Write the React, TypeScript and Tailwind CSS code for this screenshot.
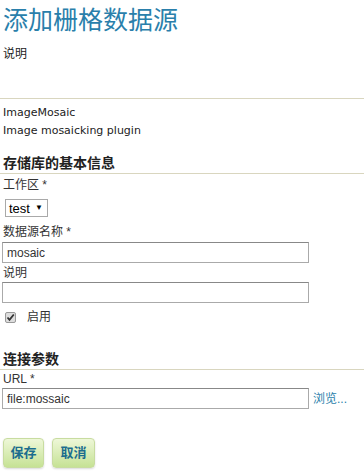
import React from "react";

const cjk = { fontFamily: '"Liberation Sans", "Noto Sans CJK SC", sans-serif' };

export default function App() {
  return (
    <div
      className="w-[364px] h-[476px] bg-white text-[#333] overflow-hidden"
      style={cjk}
    >
      <div className="flex flex-col">
        <h1 className="pl-[3px] pt-[4px] h-[44px] text-[25px] leading-[32px] text-[#2a7fab] font-normal tracking-[0px]">
          添加栅格数据源
        </h1>
        <div className="pl-[3px] text-[12px] leading-[20px] h-[54px] text-[#222]">说明</div>
        <div className="h-px bg-[#d9d6bf] w-full" />
        <div
          className="pl-[3px] pt-[5px] text-[11px] leading-[18px] text-[#222]"
          style={{ fontFamily: '"DejaVu Sans", sans-serif' }}
        >
          <div>ImageMosaic</div>
          <div>Image mosaicking plugin</div>
        </div>
        <div className="mt-[14px] pl-[3px] text-[14px] leading-[18px] font-bold text-[#222] border-b border-[#d9d6bf] pb-[1px]">
          存储库的基本信息
        </div>
        <div className="pl-[3px] text-[12px] leading-[18px] pt-[2px]">工作区 *</div>
        <div className="pl-[5px] pt-[5px]">
          <div className="w-[43px] h-[18px] border border-[#a9a9a9] flex items-center pl-[3px] gap-[5px] text-[13px] leading-none text-black">
            <span>test</span>
            <span className="text-[8px]">▼</span>
          </div>
        </div>
        <div className="pl-[3px] pt-[6px] text-[12px] leading-[18px]">数据源名称 *</div>
        <div className="pl-[2px] pt-[1px]">
          <div className="w-[307px] h-[21px] border border-[#aaa] border-t-[#888] flex items-center pl-[4px] text-[12px] text-[#333]">
            mosaic
          </div>
        </div>
        <div className="pl-[3px] text-[12px] leading-[18px] pt-[1px]">说明</div>
        <div className="pl-[2px]">
          <div className="w-[307px] h-[21px] border border-[#aaa] border-t-[#888]" />
        </div>
        <div className="flex items-center pl-[5px] pt-[5px]">
          <div className="w-[11px] h-[11px] border border-[#999] bg-[#ddd] rounded-[2px] flex items-center justify-center">
            <svg width="9" height="9" viewBox="0 0 9 9">
              <path d="M1.5 4.5 L3.5 6.8 L7.8 1.5" stroke="#333" strokeWidth="1.8" fill="none" />
            </svg>
          </div>
          <span className="ml-[11px] text-[12px] leading-[18px]">启用</span>
        </div>
        <div className="mt-[24px] pl-[3px] text-[14px] leading-[18px] font-bold text-[#222] border-b border-[#d9d6bf] pb-[1px]">
          连接参数
        </div>
        <div className="pl-[3px] text-[12px] leading-[18px]">URL *</div>
        <div className="pl-[2px] flex items-center">
          <div className="w-[307px] h-[21px] border border-[#aaa] border-t-[#888] flex items-center pl-[4px] text-[12px] text-[#333]">
            file:mossaic
          </div>
          <a className="ml-[4px] text-[12px] text-[#2a7fab]">浏览...</a>
        </div>
        <div className="flex gap-[8px] pl-[3px] mt-[29px]">
          <button className="w-[41px] h-[30px] rounded-[4px] border border-[#c8dca0] bg-gradient-to-b from-[#eef7d8] to-[#c6e294] shadow-[0_1px_2px_rgba(0,0,0,0.15)] text-[13px] font-bold text-[#1c6d8e]">
            保存
          </button>
          <button className="w-[43px] h-[30px] rounded-[4px] border border-[#c8dca0] bg-gradient-to-b from-[#eef7d8] to-[#c6e294] shadow-[0_1px_2px_rgba(0,0,0,0.15)] text-[13px] font-bold text-[#1c6d8e]">
            取消
          </button>
        </div>
      </div>
    </div>
  );
}
